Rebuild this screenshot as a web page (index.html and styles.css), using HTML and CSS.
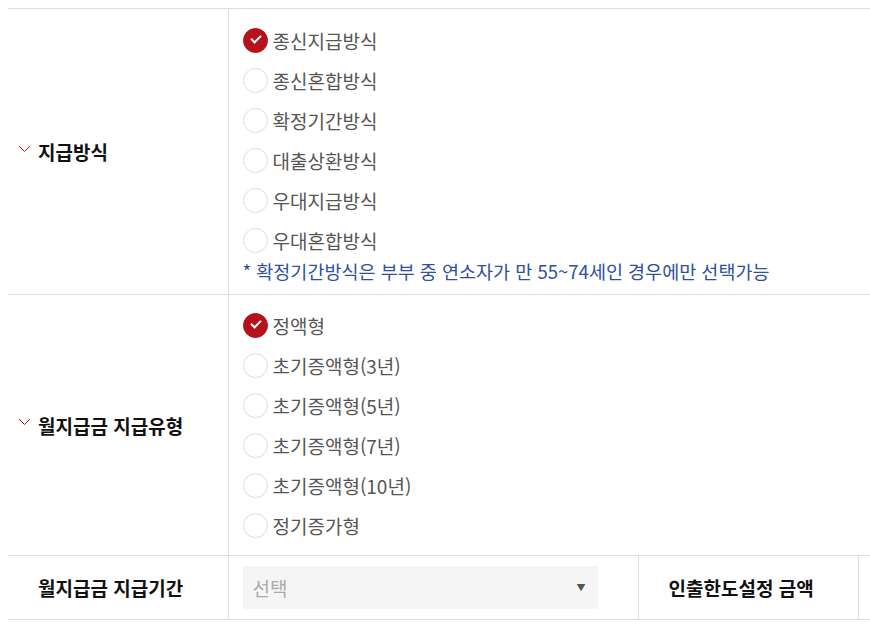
FILE: index.html
```html
<!DOCTYPE html>
<html lang="ko">

<head>
    <meta charset="utf-8">
    <title>월지급금 지급방식</title>
    <link rel="stylesheet" href="styles.css">
</head>

<body>
    <div class="wrap">
        <table class="form-table">
            <colgroup>
                <col class="col-th">
                <col class="col-td">
                <col class="col-th">
                <col class="col-rest">
            </colgroup>
            <tr>
                <th class="lbl">
                    <span class="chev"><svg width="13" height="8" viewBox="0 0 13 8"><path d="M1 1 L6.5 6.5 L12 1" fill="none" stroke="#b5121b" stroke-width="1"/></svg></span>지급방식
                </th>
                <td colspan="3">
                    <ul class="opts">
                        <li class="on"><span class="radio"></span>종신지급방식</li>
                        <li><span class="radio"></span>종신혼합방식</li>
                        <li><span class="radio"></span>확정기간방식</li>
                        <li><span class="radio"></span>대출상환방식</li>
                        <li><span class="radio"></span>우대지급방식</li>
                        <li><span class="radio"></span>우대혼합방식</li>
                    </ul>
                    <p class="note">* 확정기간방식은 부부 중 연소자가 만 55~74세인 경우에만 선택가능</p>
                </td>
            </tr>
            <tr>
                <th class="lbl">
                    <span class="chev"><svg width="13" height="8" viewBox="0 0 13 8"><path d="M1 1 L6.5 6.5 L12 1" fill="none" stroke="#b5121b" stroke-width="1"/></svg></span>월지급금 지급유형
                </th>
                <td colspan="3" class="second">
                    <ul class="opts">
                        <li class="on"><span class="radio"></span>정액형</li>
                        <li><span class="radio"></span>초기증액형(3년)</li>
                        <li><span class="radio"></span>초기증액형(5년)</li>
                        <li><span class="radio"></span>초기증액형(7년)</li>
                        <li><span class="radio"></span>초기증액형(10년)</li>
                        <li><span class="radio"></span>정기증가형</li>
                    </ul>
                </td>
            </tr>
            <tr class="short">
                <th class="lbl">월지급금 지급기간</th>
                <td>
                    <div class="sel">
                        <span>선택</span>
                        <span class="arrow">▼</span>
                    </div>
                </td>
                <th class="lbl">인출한도설정 금액</th>
                <td></td>
            </tr>
        </table>
    </div>
</body>

</html>
```

FILE: styles.css
```css
body {
    margin: 8px 0 0 8px;
    font-family: "Noto Sans CJK KR", "Noto Sans", sans-serif;
    overflow: hidden;
}

.wrap {
    width: 1100px;
}

.form-table {
    border-collapse: collapse;
    table-layout: fixed;
    width: 1100px;
    border-top: 1px solid #ddd;
}

.col-th {
    width: 220px;
}

.col-td {
    width: 410px;
}

.form-table th,
.form-table td {
    border-bottom: 1px solid #ddd;
    border-right: 1px solid #ddd;
    vertical-align: middle;
}

.form-table td {
    padding: 11px 14px 12px 14px;
}

.form-table td.second {
    padding: 10px 14px 10px 14px;
}

.lbl {
    text-align: left;
    font-size: 19px;
    font-weight: bold;
    color: #111;
    padding: 0 0 0 30px;
    position: relative;
}

.chev {
    position: absolute;
    left: 10px;
    top: 50%;
    margin-top: -7px;
    line-height: 0;
}

.opts {
    list-style: none;
    margin: 0;
    padding: 0;
}

.opts li {
    display: flex;
    align-items: center;
    height: 40px;
    font-size: 19px;
    color: #555;
}

.radio {
    width: 23px;
    height: 23px;
    border: 1px solid #ddd;
    border-radius: 50%;
    margin-right: 5px;
    background: #fff;
    flex-shrink: 0;
    position: relative;
}

.on .radio {
    background: #b5121b;
    border-color: #b5121b;
}

.on .radio::after {
    content: "";
    position: absolute;
    left: 7px;
    top: 6px;
    width: 8px;
    height: 4px;
    border-left: 2px solid #fff;
    border-bottom: 2px solid #fff;
    transform: rotate(-45deg);
}

.note {
    margin: 0;
    height: 22px;
    line-height: 22px;
    font-size: 18.5px;
    color: #2f4f9f;
}

.short td {
    padding: 10px 40px 10px 14px;
}

.sel {
    display: flex;
    justify-content: space-between;
    align-items: center;
    height: 43px;
    background: #f5f5f5;
    padding: 0 12px 0 10px;
    font-size: 19px;
    color: #aaa;
}

.arrow {
    font-size: 9px;
    color: #555;
}
```
